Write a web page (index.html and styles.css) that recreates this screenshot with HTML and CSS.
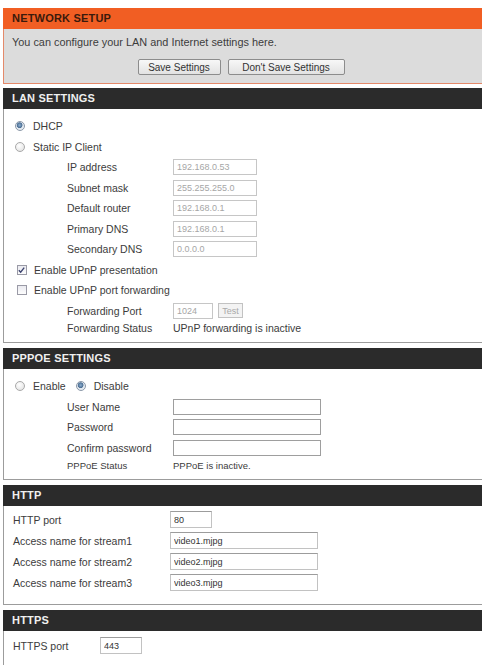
FILE: index.html
```html
<!DOCTYPE html>
<html lang="en">
<head>
    <meta charset="UTF-8">
    <meta name="viewport" content="width=device-width, initial-scale=1.0">
    <title>Network Setup</title>
    <link rel="stylesheet" href="styles.css">
</head>
<body>

<div class="page">

    <div class="panel panel-top">
        <h2 class="panel-head">NETWORK SETUP</h2>
        <div class="panel-body">
            <p class="intro">You can configure your LAN and Internet settings here.</p>
            <div class="actions">
                <button type="button" class="btn btn-save">Save Settings</button>
                <button type="button" class="btn btn-cancel">Don't Save Settings</button>
            </div>
        </div>
    </div>

    <div class="panel">
        <h2 class="panel-head">LAN SETTINGS</h2>
        <div class="panel-body lan">
            <label class="opt"><input type="radio" name="lan_mode" class="radio" checked>DHCP</label>
            <label class="opt"><input type="radio" name="lan_mode" class="radio">Static IP Client</label>

            <div class="sub"><span class="lbl">IP address</span><input class="txt ip" value="192.168.0.53" disabled></div>
            <div class="sub"><span class="lbl">Subnet mask</span><input class="txt ip" value="255.255.255.0" disabled></div>
            <div class="sub"><span class="lbl">Default router</span><input class="txt ip" value="192.168.0.1" disabled></div>
            <div class="sub"><span class="lbl">Primary DNS</span><input class="txt ip" value="192.168.0.1" disabled></div>
            <div class="sub"><span class="lbl">Secondary DNS</span><input class="txt ip" value="0.0.0.0" disabled></div>

            <label class="chk-row">
                <span class="chk">
                    <svg viewBox="0 0 10 10" width="10" height="10"><path d="M2 5.2 L4.1 7.4 L8 2.4" fill="none" stroke="#3d4470" stroke-width="1.6"/></svg>
                </span>Enable UPnP presentation
            </label>
            <label class="chk-row"><span class="chk"></span>Enable UPnP port forwarding</label>

            <div class="sub"><span class="lbl">Forwarding Port</span><input class="txt port" value="1024" disabled><button type="button" class="btn-test" disabled>Test</button></div>
            <div class="sub status"><span class="lbl">Forwarding Status</span><span>UPnP forwarding is inactive</span></div>
        </div>
    </div>

    <div class="panel">
        <h2 class="panel-head">PPPOE SETTINGS</h2>
        <div class="panel-body pppoe">
            <div class="opt">
                <label class="inline"><input type="radio" name="pppoe" class="radio">Enable</label>
                <label class="inline"><input type="radio" name="pppoe" class="radio" checked>Disable</label>
            </div>
            <div class="sub"><span class="lbl">User Name</span><input class="txt wide"></div>
            <div class="sub"><span class="lbl">Password</span><input type="password" class="txt wide"></div>
            <div class="sub"><span class="lbl">Confirm password</span><input type="password" class="txt wide"></div>
            <div class="sub status small"><span class="lbl">PPPoE Status</span><span>PPPoE is inactive.</span></div>
        </div>
    </div>

    <div class="panel">
        <h2 class="panel-head">HTTP</h2>
        <div class="panel-body http">
            <div class="row"><span class="lbl">HTTP port</span><input class="txt num" value="80"></div>
            <div class="row"><span class="lbl">Access name for stream1</span><input class="txt stream" value="video1.mjpg"></div>
            <div class="row"><span class="lbl">Access name for stream2</span><input class="txt stream" value="video2.mjpg"></div>
            <div class="row"><span class="lbl">Access name for stream3</span><input class="txt stream" value="video3.mjpg"></div>
        </div>
    </div>

    <div class="panel">
        <h2 class="panel-head">HTTPS</h2>
        <div class="panel-body https">
            <div class="row"><span class="lbl">HTTPS port</span><input class="txt num" value="443"></div>
        </div>
    </div>

</div>

</body>
</html>
```

FILE: styles.css
```css
html, body {
    margin: 0;
    padding: 0;
    overflow: hidden;
}
body {
    font-family: "Liberation Sans", Arial, sans-serif;
    font-size: 10.5px;
    color: #3c3c3c;
    background-color: #fff;
}
.page {
    padding: 8px 0 0 3px;
}
.panel {
    width: 480px;
    margin-bottom: 5px;
}
.panel-head {
    margin: 0;
    height: 21px;
    line-height: 21px;
    padding-left: 9px;
    font-size: 11px;
    font-weight: bold;
    letter-spacing: 0.2px;
    color: #f0f0f0;
    background-color: #2b2b2b;
}
.panel-body {
    border: 1px solid #9c9c9c;
    border-top: none;
}

/* top orange block */
.panel-top {
    margin-bottom: 4px;
}
.panel-top .panel-head {
    background-color: #f15e23;
    color: #3a1a0c;
}
.panel-top .panel-body {
    background-color: #dcdcdc;
    border-color: #e4896a;
    padding: 7px 4px 8px 0;
}
.intro {
    margin: 0;
    padding-left: 8px;
    font-size: 10.9px;
    line-height: 13px;
}
.actions {
    display: flex;
    justify-content: center;
    gap: 7px;
    margin-top: 10px;
}
.btn {
    height: 16px;
    padding: 0;
    font-family: inherit;
    font-size: 10px;
    color: #333;
    border: 1px solid #8c8c8c;
    border-radius: 2px;
    background: linear-gradient(#f7f7f7, #e2e2e2);
}
.btn-save {
    width: 83px;
}
.btn-cancel {
    width: 117px;
}

/* form rows */
.lan, .pppoe {
    padding: 7px 0;
}
.opt, .sub, .chk-row {
    display: flex;
    align-items: center;
    height: 20.5px;
}
.opt {
    padding-left: 11px;
}
.inline {
    display: flex;
    align-items: center;
    margin-right: 10px;
}
.radio {
    appearance: none;
    -webkit-appearance: none;
    width: 10px;
    height: 10px;
    margin: 0 8px 0 0;
    border: 1px solid #a9a9a9;
    border-radius: 50%;
    background: radial-gradient(circle at 40% 35%, #fff, #dedede);
    box-sizing: border-box;
}
.radio:checked {
    border-color: #8b98a8;
    background: radial-gradient(circle at 45% 40%, #8fb0d0 0, #4c6f94 2.5px, #dfe6ee 3.2px, #f4f6f8 100%);
}
.chk-row {
    padding-left: 13px;
}
.chk {
    display: inline-flex;
    width: 10px;
    height: 10px;
    margin-right: 7px;
    border: 1px solid #9a9aa6;
    background: linear-gradient(#eaeaf0, #fdfdfd);
    box-sizing: border-box;
}
.chk svg {
    margin: -1px 0 0 -1px;
}
.sub {
    padding-left: 63px;
}
.sub .lbl {
    width: 106px;
    flex-shrink: 0;
}
.sub.status {
    height: 14px;
}
.small {
    font-size: 9.5px;
}

.txt {
    box-sizing: border-box;
    height: 16px;
    margin: 0;
    padding: 0 3px;
    font-family: inherit;
    font-size: 9px;
    color: #333;
    border: 1px solid #b4b4b4;
    background-color: #fff;
    outline: none;
}
.txt:disabled {
    color: #a6a6a6;
    border-color: #c6c6c6;
    background-color: #fff;
}
.ip {
    width: 84px;
}
.port {
    width: 40px;
}
.wide {
    width: 148px;
    border-color: #9e9e9e;
}
.btn-test {
    height: 15px;
    width: 25px;
    margin-left: 5px;
    padding: 0;
    font-family: inherit;
    font-size: 9px;
    color: #a9a9a9;
    border: 1px solid #c2c2c2;
    background-color: #f3f3f3;
}

/* http blocks */
.http {
    padding: 3px 0 11px;
}
.https {
    padding: 4px 0 10px;
}
.row {
    display: flex;
    align-items: center;
    height: 21px;
    padding-left: 9px;
}
.http .lbl {
    width: 157px;
}
.https .lbl {
    width: 87px;
}
.row .txt {
    height: 17px;
    border-color: #c2c2c2;
    border-top-color: #9c9c9c;
}
.num {
    width: 42px;
}
.stream {
    width: 148px;
}
```
